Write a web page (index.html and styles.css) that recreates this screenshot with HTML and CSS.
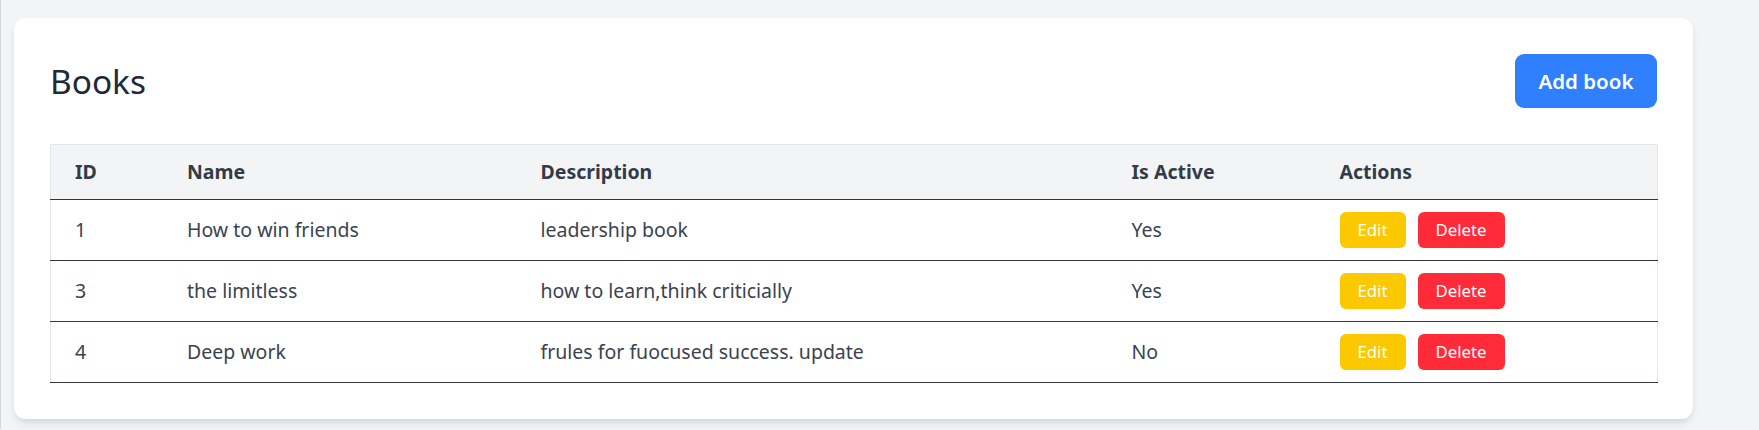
FILE: index.html
```
<!DOCTYPE html>
<html lang="en">
<head>
<meta charset="utf-8">
<title>Books</title>
<link rel="stylesheet" href="styles.css">
</head>
<body>
<div class="page">
  <div class="card">
    <div class="card-header">
      <h1 class="title">Books</h1>
      <button class="btn-add">Add book</button>
    </div>
    <table class="books">
      <colgroup>
        <col class="c-id"><col class="c-name"><col class="c-desc"><col class="c-active"><col class="c-actions">
      </colgroup>
      <thead>
        <tr><th>ID</th><th>Name</th><th>Description</th><th>Is Active</th><th>Actions</th></tr>
      </thead>
      <tbody>
        <tr>
          <td>1</td><td>How to win friends</td><td>leadership book</td><td>Yes</td>
          <td class="actions"><button class="btn-edit">Edit</button><button class="btn-delete">Delete</button></td>
        </tr>
        <tr>
          <td>3</td><td>the limitless</td><td>how to learn,think criticially</td><td>Yes</td>
          <td class="actions"><button class="btn-edit">Edit</button><button class="btn-delete">Delete</button></td>
        </tr>
        <tr>
          <td>4</td><td>Deep work</td><td>frules for fuocused success. update</td><td>No</td>
          <td class="actions"><button class="btn-edit">Edit</button><button class="btn-delete">Delete</button></td>
        </tr>
      </tbody>
    </table>
  </div>
</div>
</body>
</html>
```
FILE: styles.css
```
html, body {
  margin: 0;
  padding: 0;
  background: #f3f4f6;
}
body {
  font-family: "Noto Sans", "Open Sans", sans-serif;
  color: #374151;
  border-left: 1px solid #d4d6da;
  box-sizing: border-box;
}
.page {
  padding: 18px 66px 10px 13px;
}
.card {
  background: #ffffff;
  border-radius: 12px;
  box-shadow: 0 6px 10px -2px rgba(0, 0, 0, 0.10), 0 2px 6px -2px rgba(0, 0, 0, 0.08);
  padding: 36px;
}
.card-header {
  display: flex;
  justify-content: space-between;
  align-items: center;
  margin-bottom: 36px;
}
.title {
  margin: 0;
  font-size: 33.4px;
  line-height: 48px;
  font-weight: 400;
  color: #1f2937;
}
.btn-add {
  font-family: inherit;
  font-size: 20.5px;
  font-weight: 600;
  line-height: 36px;
  padding: 9px 0;
  width: 142px;
  white-space: nowrap;
  text-align: center;
  border: none;
  border-radius: 9px;
  background: #2f7fff;
  color: #ffffff;
}
.books {
  width: 100%;
  table-layout: fixed;
  border-collapse: collapse;
  border: 1px solid #e5e7eb;
  border-bottom: none;
}
.c-id { width: 112.5px; }
.c-name { width: 353.5px; }
.c-desc { width: 591px; }
.c-active { width: 208px; }
.c-actions { width: 342px; }
.books th {
  background: #f3f4f6;
  text-align: left;
  font-size: 19.5px;
  font-weight: 700;
  line-height: 30px;
  padding: 12px 24px;
  color: #333b48;
  border-bottom: 1px solid #2f3642;
}
.books td {
  font-size: 19.5px;
  line-height: 30px;
  padding: 12px 24px;
  color: #3b4250;
  border-bottom: 1px solid #2f3642;
  vertical-align: middle;
}
.actions {
  white-space: nowrap;
}
.btn-edit, .btn-delete {
  font-family: inherit;
  font-size: 16.75px;
  line-height: 24px;
  padding: 6px 0;
  text-align: center;
  border: none;
  border-radius: 6px;
  color: #ffffff;
  vertical-align: middle;
}
.btn-edit {
  background: #fcc800;
  width: 66px;
}
.btn-delete {
  background: #ff2b38;
  margin-left: 12px;
  width: 87px;
}
```
